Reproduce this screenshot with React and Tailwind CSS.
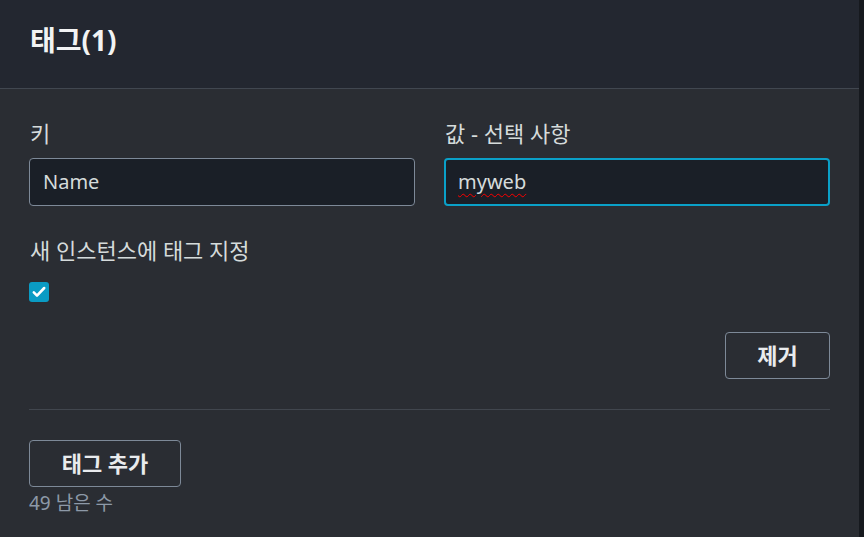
import React from 'react';

const font = { fontFamily: '"Noto Sans", "Noto Sans CJK KR", sans-serif' };

const CheckIcon = () => (
  <svg viewBox="0 0 20 20" className="w-[16px] h-[16px]">
    <path d="M3.5 10.5l4 4 9-9.5" fill="none" stroke="white" strokeWidth="3.2" strokeLinecap="round" strokeLinejoin="round" />
  </svg>
);

const App = () => {
  return (
    <div className="flex w-[864px] h-[537px] overflow-hidden bg-[#2a2d33] text-[#d5dbdb]" style={font}>
      <div className="flex-1 flex flex-col">
        {/* Header */}
        <div className="h-[89px] bg-[#232730] border-b border-[#414750] flex items-center px-[30px] pb-[8px]">
          <h2 className="text-[28px] font-bold text-[#f2f3f3] leading-none">태그(1)</h2>
        </div>

        {/* Body */}
        <div className="flex flex-col px-[29px] pt-[31px]">
          <div className="grid grid-cols-2 gap-[29px]">
            <div className="flex flex-col">
              <label className="text-[22px] leading-[26px] text-[#d5dbdb] pl-[1px]">키</label>
              <div className="mt-[12px] h-[48px] rounded-[4px] border border-[#7d8998] bg-[#1a1f27] flex items-center px-[13px]">
                <span className="text-[20px] text-[#d5dbdb]">Name</span>
              </div>
            </div>
            <div className="flex flex-col">
              <label className="text-[22px] leading-[26px] text-[#d5dbdb] pl-[1px]">값 - 선택 사항</label>
              <div className="mt-[12px] h-[48px] rounded-[4px] border-2 border-[#0aa0c8] bg-[#1a1f27] flex items-center px-[12px]">
                <span className="text-[20px] text-[#d5dbdb] underline decoration-wavy decoration-[#ff0000] decoration-1 underline-offset-[4px]">myweb</span>
              </div>
            </div>
          </div>

          <label className="mt-[31px] text-[22px] leading-[26px] pl-[1px]">새 인스턴스에 태그 지정</label>
          <div className="mt-[19px] w-[20px] h-[20px] rounded-[3px] bg-[#0a9bc4] flex items-center justify-center">
            <CheckIcon />
          </div>

          <div className="flex justify-end mt-[30px]">
            <button className="w-[105px] h-[47px] rounded-[4px] border border-[#7d8998] text-[22px] font-bold text-[#e9ebed]">
              제거
            </button>
          </div>

          <div className="mt-[30px] h-px bg-[#41464e]" />

          <button className="mt-[30px] w-[152px] h-[47px] rounded-[4px] border border-[#7d8998] text-[22px] font-bold text-[#e9ebed]">
            태그 추가
          </button>
          <div className="mt-[5px] text-[19px] leading-[22px] text-[#8d99a8]">49 남은 수</div>
        </div>
      </div>
      <div className="w-[5px] bg-[#16191e]" />
    </div>
  );
};

export default App;
